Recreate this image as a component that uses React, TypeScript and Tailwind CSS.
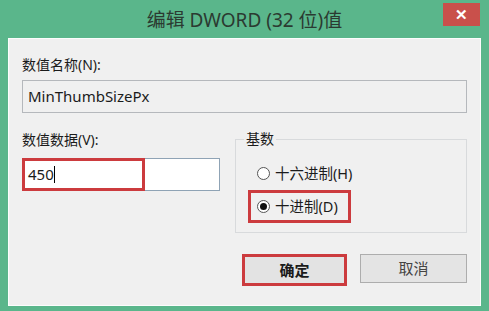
import React from "react";

const font = "font-['Noto_Sans','Noto_Sans_CJK_SC',sans-serif]";

const Radio = ({checked}: {checked?: boolean}) => (
    <span className="w-[13px] h-[13px] rounded-full border border-[#555] bg-white flex items-center justify-center shrink-0">
        {checked && <span className="w-[7px] h-[7px] rounded-full bg-[#111]"></span>}
    </span>
);

const App = () => {
    return (
        <div className={`w-[489px] h-[311px] bg-[#5ab68b] flex flex-col ${font} text-[#1b1b1b]`}>
            <div className="relative h-[38px] flex items-center justify-center shrink-0">
                <span className="text-[19px] text-[#2b3a31] pt-[2px]">编辑 DWORD (32 位)值</span>
                <div className="absolute right-[9px] top-[3px] w-[37px] h-[23px] bg-[#c9504b] flex items-center justify-center text-white text-[15px] font-bold">
                    ✕
                </div>
            </div>
            <div className="mx-[8px] mb-[5px] flex-1 bg-[#f0f0f0] border border-[#fbfdfc] flex flex-col px-[13px] pt-[17px] text-[14px]">
                <div className="leading-[18px]">数值名称(N):</div>
                <div className="mt-[6px] h-[33px] border border-[#b5b8bc] bg-[#f0f0f0] flex items-center pl-[5px] text-[15px]">
                    MinThumbSizePx
                </div>
                <div className="flex mt-[18px]">
                    <div className="flex flex-col w-[198px]">
                        <div className="leading-[18px]">数值数据(V):</div>
                        <div className="mt-[9px] h-[33px] border border-[#8fa3b5] bg-white flex">
                            <div className="w-[123px] h-[33px] -mt-px -ml-px border-[3px] border-[#cc3b3e] flex items-center pl-[3px] text-[15px]">
                                450<span className="w-px h-[17px] bg-black"></span>
                            </div>
                        </div>
                    </div>
                    <div className="ml-[15px] mt-[8px] w-[232px] h-[94px] border border-[#d8dadc] relative flex flex-col pl-[12px] pt-[21px]">
                        <span className="absolute -top-[10px] left-[8px] px-[2px] bg-[#f0f0f0] leading-[18px]">基数</span>
                        <div className="flex items-center gap-[5px] h-[25px] pl-[9px] text-[14.5px]">
                            <Radio/>
                            <span>十六进制(H)</span>
                        </div>
                        <div className="mt-[4px] w-[103px] h-[33px] border-[3px] border-[#cc3b3e] flex items-center gap-[5px] pl-[6px] text-[14.5px]">
                            <Radio checked/>
                            <span>十进制(D)</span>
                        </div>
                    </div>
                </div>
                <div className="flex mt-[21px] pl-[220px] gap-[13px]">
                    <div className="w-[105px] h-[32px] border-[3px] border-[#cc3b3e] bg-[#e3e3e3] flex items-center justify-center font-bold text-[15px]">
                        确定
                    </div>
                    <div className="w-[107px] h-[29px] border border-[#adadad] bg-[#e4e4e4] flex items-center justify-center text-[15px] text-[#444]">
                        取消
                    </div>
                </div>
            </div>
        </div>
    );
};

export default App;
